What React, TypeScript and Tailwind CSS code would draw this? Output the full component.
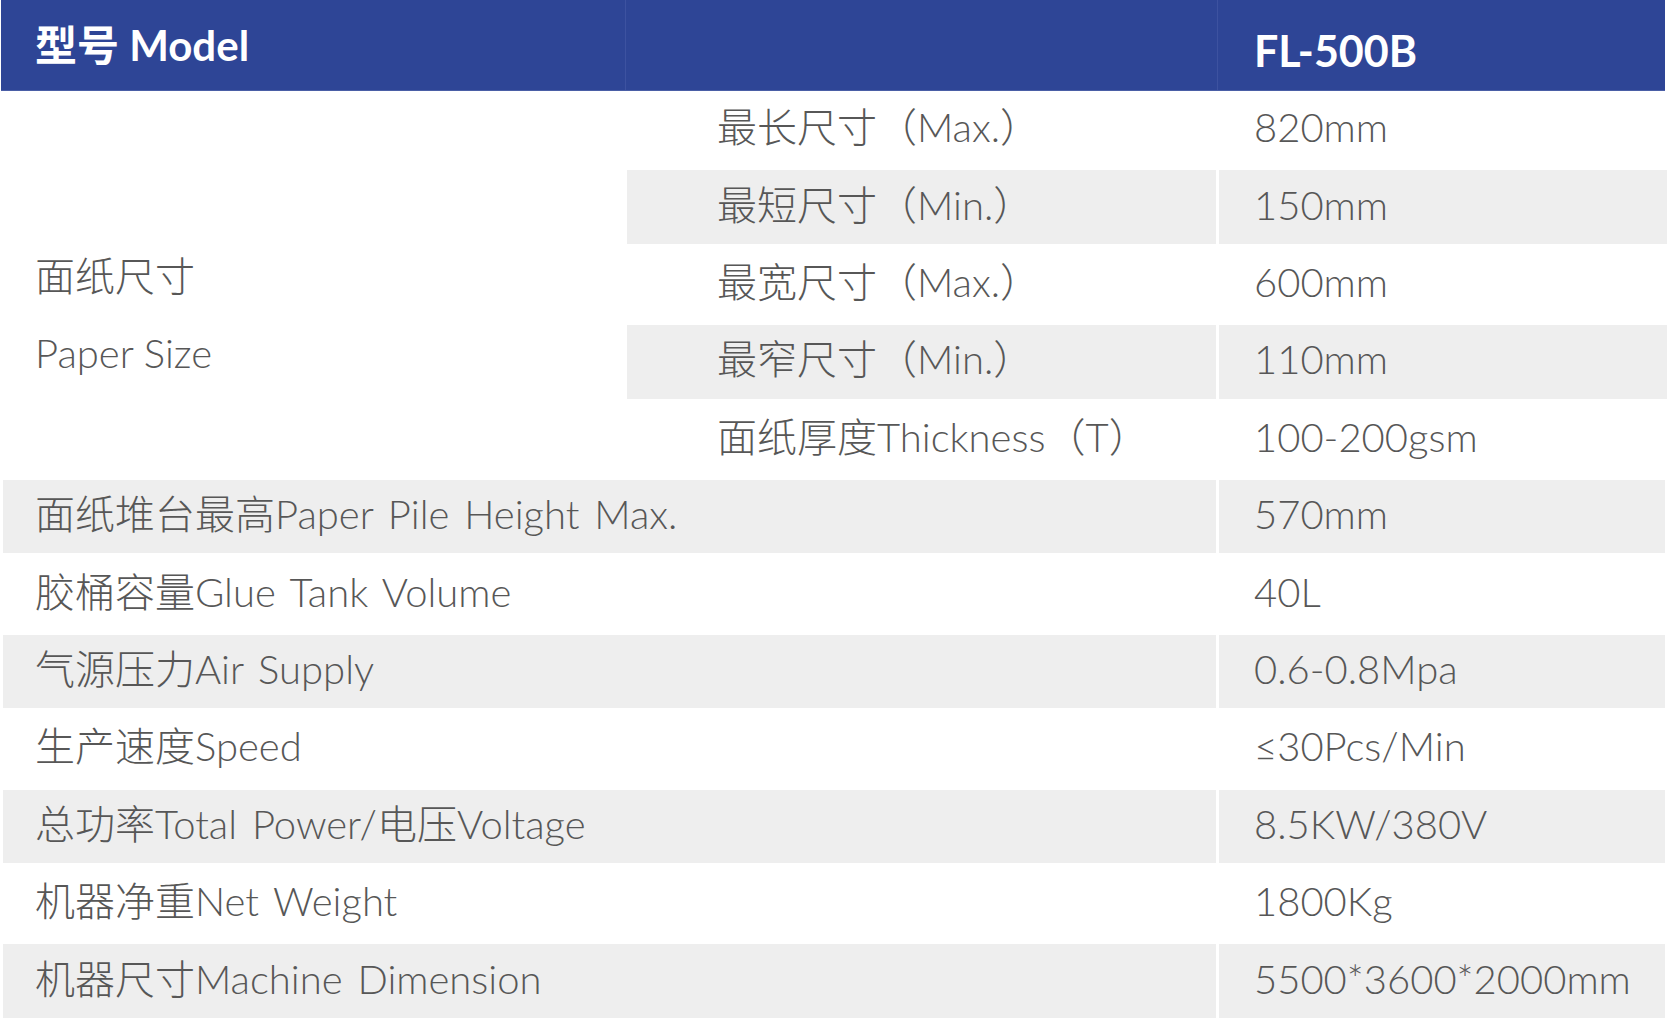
import React from "react";

const font = {
  fontFamily: '"Lato", "Noto Sans CJK SC", sans-serif',
};

const subRows: { label: string; value: string; gray: boolean }[] = [
  { label: "最长尺寸（Max.）", value: "820mm", gray: false },
  { label: "最短尺寸（Min.）", value: "150mm", gray: true },
  { label: "最宽尺寸（Max.）", value: "600mm", gray: false },
  { label: "最窄尺寸（Min.）", value: "110mm", gray: true },
  { label: "面纸厚度Thickness（T）", value: "100-200gsm", gray: false },
];

const rows: { label: string; value: string; gray: boolean }[] = [
  { label: "面纸堆台最高Paper Pile Height Max.", value: "570mm", gray: true },
  { label: "胶桶容量Glue Tank Volume", value: "40L", gray: false },
  { label: "气源压力Air Supply", value: "0.6-0.8Mpa", gray: true },
  { label: "生产速度Speed", value: "≤30Pcs/Min", gray: false },
  { label: "总功率Total Power/电压Voltage", value: "8.5KW/380V", gray: true },
  { label: "机器净重Net Weight", value: "1800Kg", gray: false },
  { label: "机器尺寸Machine Dimension", value: "5500*3600*2000mm", gray: true },
];

export default function App() {
  return (
    <div
      className="w-[1667px] h-[1020px] bg-white text-[#575757] text-[40px] font-light overflow-hidden"
      style={font}
    >
      {/* Header */}
      <div className="ml-[1px] w-[1664px] h-[91px] flex bg-[#2e4596] text-white font-bold border-b border-[#4a5ea6]">
        <div className="w-[624px] h-full flex items-center pl-[34px] text-[42px]">
          型号 Model
        </div>
        <div className="w-[592px] h-full border-l border-[#3d52a0]" />
        <div className="flex-1 h-full border-l border-[#3d52a0] flex items-center pl-[36px] text-[43px] pt-[12px]">
          FL-500B
        </div>
      </div>

      {/* Paper size block */}
      <div className="flex h-[387px] pl-[3px]">
        <div className="w-[622px] flex flex-col justify-center pl-[32px] pt-[60px] leading-[77px]">
          <div>面纸尺寸</div>
          <div>Paper Size</div>
        </div>
        <div className="ml-[2px] flex-1 flex flex-col">
          {subRows.map((r) => (
            <div key={r.label} className="h-[77.4px] flex gap-[3px] py-[2px]">
              <div
                className={`w-[589px] flex items-center pl-[90px] pb-[5px] whitespace-nowrap ${
                  r.gray ? "bg-[#eeeeee]" : "bg-white"
                }`}
              >
                {r.label}
              </div>
              <div
                className={`flex-1 flex items-center pl-[35px] pb-[5px] whitespace-nowrap ${
                  r.gray ? "bg-[#eeeeee]" : "bg-white"
                }`}
              >
                {r.value}
              </div>
            </div>
          ))}
        </div>
      </div>

      {/* Remaining rows */}
      {rows.map((r) => (
        <div key={r.label} className="h-[77.4px] flex gap-[3px] py-[2px] pl-[3px] pr-[2px]">
          <div
            className={`w-[1213px] flex items-center pl-[32px] pb-[5px] whitespace-nowrap [word-spacing:4px] ${
              r.gray ? "bg-[#eeeeee]" : "bg-white"
            }`}
          >
            {r.label}
          </div>
          <div
            className={`flex-1 flex items-center pl-[35px] pb-[5px] whitespace-nowrap ${
              r.gray ? "bg-[#eeeeee]" : "bg-white"
            }`}
          >
            {r.value}
          </div>
        </div>
      ))}
    </div>
  );
}
